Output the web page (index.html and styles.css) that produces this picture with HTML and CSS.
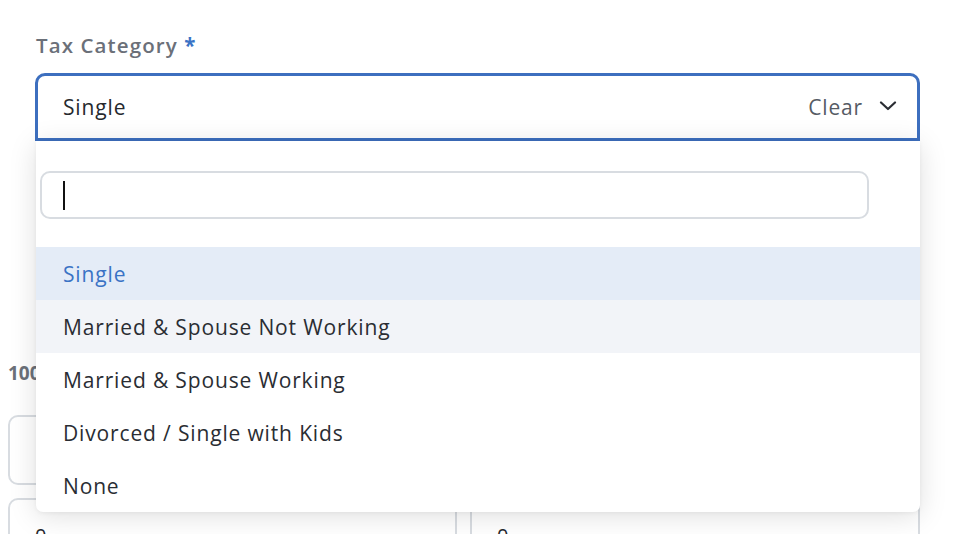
FILE: index.html
```html
<!DOCTYPE html>
<html>
<head>
<meta charset="utf-8">
<link rel="stylesheet" href="styles.css">
</head>
<body>
<div class="page">
  <div class="field">
    <div class="label">Tax Category <span class="req">*</span></div>
    <div class="select">
      <div class="control">
        <span class="value">Single</span>
        <span class="clear">Clear</span>
        <svg class="chev" width="18" height="10" viewBox="0 0 18 10"><path d="M2 1.5 L9 8 L16 1.5" fill="none" stroke="#2a2d33" stroke-width="2.2" stroke-linecap="round" stroke-linejoin="round"/></svg>
      </div>
      <div class="menu">
        <div class="search-wrap">
          <div class="search"><span class="caret"></span></div>
        </div>
        <div class="option selected">Single</div>
        <div class="option hover">Married &amp; Spouse Not Working</div>
        <div class="option">Married &amp; Spouse Working</div>
        <div class="option">Divorced / Single with Kids</div>
        <div class="option">None</div>
      </div>
    </div>
  </div>
  <div class="lower">
    <div class="sublabel">1000</div>
    <div class="grid">
      <div class="box"></div>
      <div class="box"></div>
      <div class="box short"><span class="num">0</span></div>
      <div class="box short"><span class="num">0</span></div>
    </div>
  </div>
</div>
</body>
</html>
```
FILE: styles.css
```css
* { box-sizing: border-box; }
html, body { margin: 0; padding: 0; background: #fff; overflow: hidden; }
body { font-family: "Open Sans", "Liberation Sans", sans-serif; width: 970px; height: 534px; }
.page { padding-top: 31px; }
.field { padding-left: 35px; padding-right: 50px; }
.label { font-size: 20.5px; color: #6b7079; font-weight: 600; height: 42px; padding-left: 1px; letter-spacing: 1.1px; }
.req { color: #3a73c5; font-weight: 700; }
.select { position: relative; z-index: 2; }
.control {
  height: 68px;
  border: 3px solid #3d6fbf;
  border-radius: 10px 10px 0 0;
  display: flex;
  align-items: center;
  padding: 0 20px 0 25px;
  background: #fff;
}
.value { font-size: 21px; color: #26292e; flex: 1; letter-spacing: 0.85px; }
.clear { font-size: 21px; color: #565b64; margin-right: 16px; letter-spacing: 0.85px; }
.chev { display: block; margin-top: -2px; }
.menu {
  position: absolute;
  top: 100%;
  left: 1px;
  right: 0;
  background: #fff;
  border-radius: 0 0 7px 7px;
  box-shadow: 0 4px 28px rgba(0,0,0,0.13), 0 1px 4px rgba(0,0,0,0.05);
}
.search-wrap { padding: 30px 51px 28px 4px; }
.search {
  height: 48px;
  border: 2px solid #d8dce1;
  border-radius: 10px;
  display: flex;
  align-items: center;
  padding-left: 21px;
}
.caret { display: block; width: 2px; height: 29px; background: #111; }
.option {
  height: 53px;
  display: flex;
  align-items: center;
  padding-left: 27px;
  font-size: 21px;
  letter-spacing: 0.85px;
  color: #2a2d33;
}
.option.selected { background: #e4ecf7; color: #3a73c5; }
.option.hover { background: #f2f4f8; }
.option:last-child { border-radius: 0 0 7px 7px; }
.lower { padding: 219px 50px 0 8px; }
.sublabel { font-size: 19px; font-weight: 700; color: #6b7079; height: 55px; }
.grid { display: grid; grid-template-columns: 449px 450px; column-gap: 13px; row-gap: 13px; }
.box { height: 70px; border: 2px solid #d8dce1; border-radius: 10px; padding: 22px 0 0 25px; }
.num { font-size: 20px; color: #26292e; }
```
